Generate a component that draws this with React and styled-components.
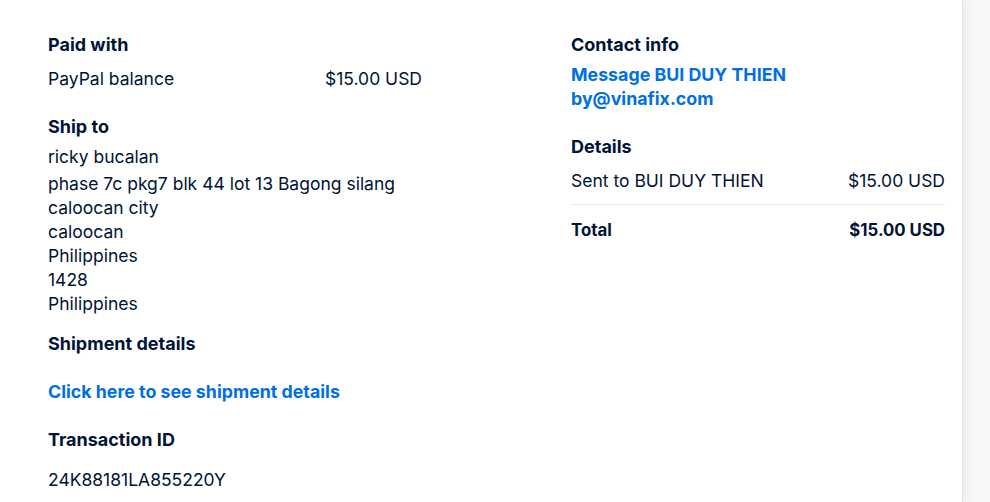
import React from 'react';
import styled, { createGlobalStyle } from 'styled-components';

const GlobalStyle = createGlobalStyle`
  body {
    margin: 0;
    background: #f7f7f7;
    font-family: Inter, "Noto Sans", "Liberation Sans", sans-serif;
    color: #001435;
  }
`;

const Page = styled.div`
  height: 502px;
  overflow: hidden;
  display: flex;
`;

const Card = styled.div`
  width: 963px;
  flex-shrink: 0;
  background: #ffffff;
  border-right: 1px solid #e3e3e3;
  box-shadow: 2px 0 10px rgba(0, 0, 0, 0.06);
  box-sizing: border-box;
  padding: 33px 18px 0 48px;
  display: grid;
  grid-template-columns: 374px 374px;
  column-gap: 149px;
  align-content: start;
`;

const Column = styled.div`
  display: flex;
  flex-direction: column;
`;

const Title = styled.div`
  font-size: 18px;
  font-weight: 700;
  line-height: 24px;
  margin-top: ${p => p.$mt || 0}px;
`;

const Text = styled.div`
  font-size: 17.5px;
  line-height: 24px;
  margin-top: ${p => p.$mt || 0}px;
`;

const Link = styled.a`
  display: block;
  color: #0070e0;
  font-size: 17.8px;
  font-weight: 700;
  line-height: 24px;
  text-decoration: none;
  margin-top: ${p => p.$mt || 0}px;
  cursor: pointer;
`;

const Row = styled.div`
  display: flex;
  justify-content: space-between;
  font-size: ${p => (p.$bold ? 16.8 : 17.5)}px;
  line-height: 24px;
  font-weight: ${p => (p.$bold ? 700 : 400)};
  margin-top: ${p => p.$mt || 0}px;
`;

const Divider = styled.div`
  height: 1px;
  background: #e6e8ea;
  margin-top: 11px;
`;

const address = [
  'caloocan city',
  'caloocan',
  'Philippines',
  '1428',
  'Philippines',
];

export default function App() {
  return (
    <>
      <GlobalStyle />
      <Page>
        <Card>
          <Column>
            <Title>Paid with</Title>
            <Row $mt={10}>
              <span>PayPal balance</span>
              <span>$15.00 USD</span>
            </Row>

            <Title $mt={24}>Ship to</Title>
            <Text $mt={6}>ricky bucalan</Text>
            <Text $mt={3}>phase 7c pkg7 blk 44 lot 13 Bagong silang</Text>
            {address.map((line, i) => (
              <Text key={i}>{line}</Text>
            ))}

            <Title $mt={16}>Shipment details</Title>
            <Link $mt={24}>Click here to see shipment details</Link>

            <Title $mt={24}>Transaction ID</Title>
            <Text $mt={16}>24K88181LA855220Y</Text>
          </Column>

          <Column>
            <Title>Contact info</Title>
            <Link $mt={6}>Message BUI DUY THIEN</Link>
            <Link>by@vinafix.com</Link>

            <Title $mt={24}>Details</Title>
            <Row $mt={10}>
              <span>Sent to BUI DUY THIEN</span>
              <span>$15.00 USD</span>
            </Row>
            <Divider />
            <Row $mt={13} $bold>
              <span>Total</span>
              <span>$15.00 USD</span>
            </Row>
          </Column>
        </Card>
      </Page>
    </>
  );
}
